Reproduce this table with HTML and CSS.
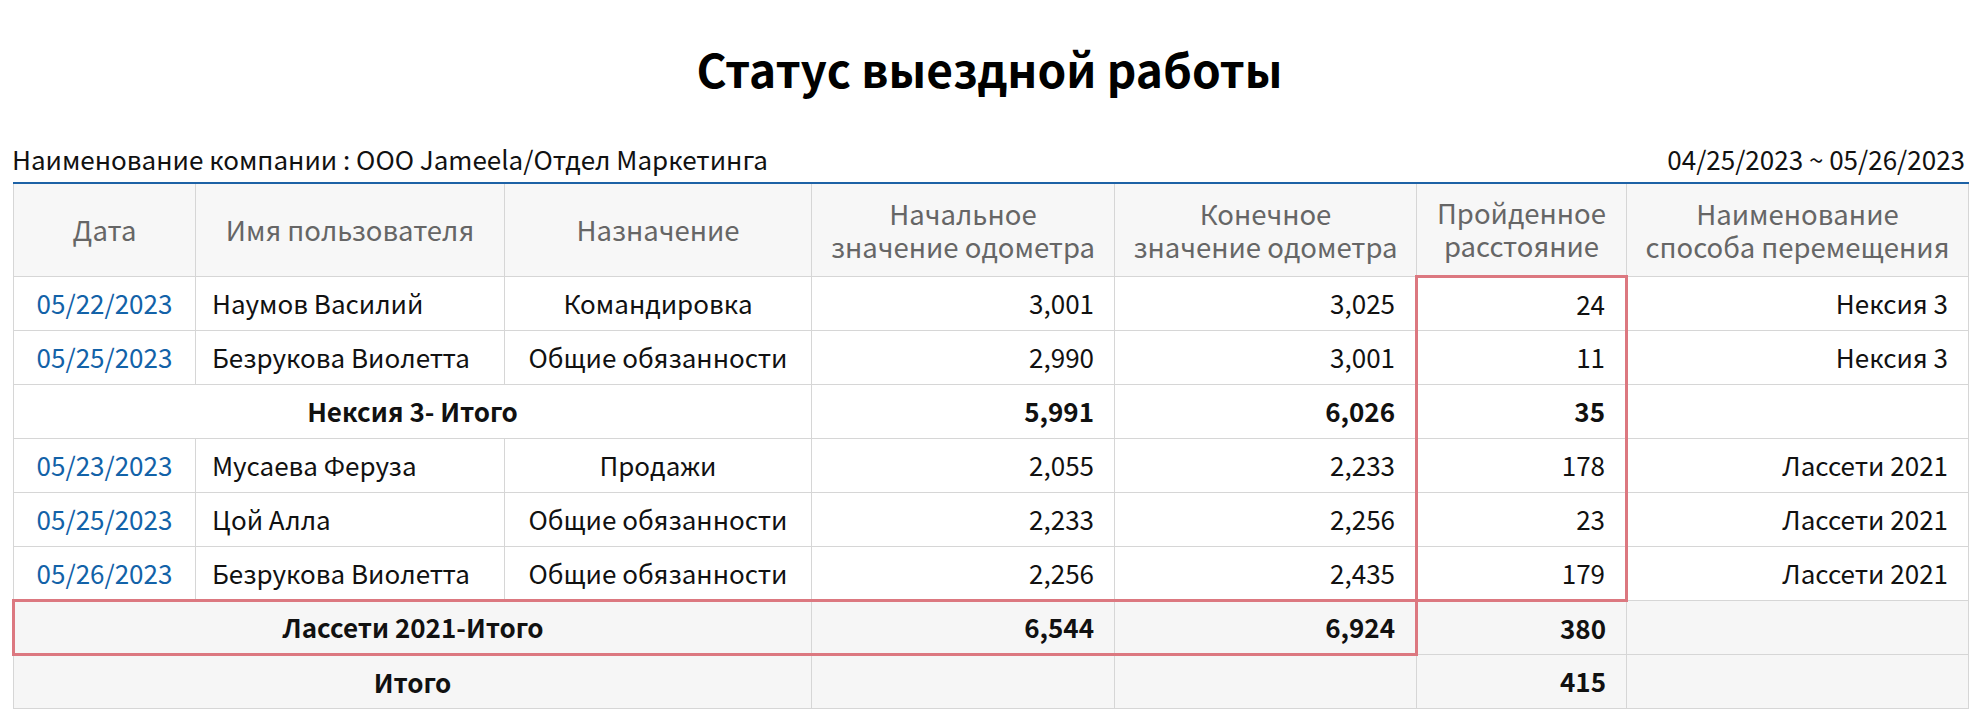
FILE: index.html
```html
<!DOCTYPE html>
<html lang="ru">
<head>
<meta charset="utf-8">
<title>Статус выездной работы</title>
<link rel="stylesheet" href="styles.css">
</head>
<body>
<div class="page">
  <h1 class="title">Статус выездной работы</h1>
  <div class="info">
    <span>Наименование компании : ООО Jameela/Отдел Маркетинга</span>
    <span>04/25/2023 ~ 05/26/2023</span>
  </div>
  <table class="report">
    <colgroup>
      <col class="c-date"><col class="c-user"><col class="c-purpose"><col class="c-start"><col class="c-end"><col class="c-dist"><col class="c-mode">
    </colgroup>
    <thead>
      <tr>
        <th>Дата</th>
        <th>Имя пользователя</th>
        <th>Назначение</th>
        <th>Начальное<br>значение одометра</th>
        <th>Конечное<br>значение одометра</th>
        <th>Пройденное<br>расстояние</th>
        <th>Наименование<br>способа перемещения</th>
      </tr>
    </thead>
    <tbody>
      <tr>
        <td class="date"><a href="#">05/22/2023</a></td>
        <td class="name">Наумов Василий</td>
        <td class="center">Командировка</td>
        <td class="num">3,001</td>
        <td class="num">3,025</td>
        <td class="num hl hl-top">24</td>
        <td class="num">Нексия 3</td>
      </tr>
      <tr>
        <td class="date"><a href="#">05/25/2023</a></td>
        <td class="name">Безрукова Виолетта</td>
        <td class="center">Общие обязанности</td>
        <td class="num">2,990</td>
        <td class="num">3,001</td>
        <td class="num hl">11</td>
        <td class="num">Нексия 3</td>
      </tr>
      <tr class="subtotal">
        <td class="center" colspan="3">Нексия 3- Итого</td>
        <td class="num">5,991</td>
        <td class="num">6,026</td>
        <td class="num hl">35</td>
        <td></td>
      </tr>
      <tr>
        <td class="date"><a href="#">05/23/2023</a></td>
        <td class="name">Мусаева Феруза</td>
        <td class="center">Продажи</td>
        <td class="num">2,055</td>
        <td class="num">2,233</td>
        <td class="num hl">178</td>
        <td class="num">Лассети 2021</td>
      </tr>
      <tr>
        <td class="date"><a href="#">05/25/2023</a></td>
        <td class="name">Цой Алла</td>
        <td class="center">Общие обязанности</td>
        <td class="num">2,233</td>
        <td class="num">2,256</td>
        <td class="num hl">23</td>
        <td class="num">Лассети 2021</td>
      </tr>
      <tr>
        <td class="date"><a href="#">05/26/2023</a></td>
        <td class="name">Безрукова Виолетта</td>
        <td class="center">Общие обязанности</td>
        <td class="num">2,256</td>
        <td class="num">2,435</td>
        <td class="num hl hl-bottom">179</td>
        <td class="num">Лассети 2021</td>
      </tr>
      <tr class="subtotal grey">
        <td class="center rb rb-first" colspan="3">Лассети 2021-Итого</td>
        <td class="num rb">6,544</td>
        <td class="num rb rb-last">6,924</td>
        <td class="num">380</td>
        <td></td>
      </tr>
      <tr class="subtotal grey">
        <td class="center" colspan="3">Итого</td>
        <td></td>
        <td></td>
        <td class="num">415</td>
        <td></td>
      </tr>
    </tbody>
  </table>
</div>
</body>
</html>
```

FILE: styles.css
```css
* { box-sizing: border-box; }

html, body {
  margin: 0;
  padding: 0;
  background: #ffffff;
}

body {
  font-family: "Noto Sans CJK KR", "Noto Sans", sans-serif;
  color: #111;
}

.page {
  padding: 0 11px 0 12px;
}

.title {
  margin: 0;
  padding-top: 36px;
  height: 130px;
  text-align: center;
  font-size: 46px;
  font-weight: 700;
  line-height: 64px;
  color: #000;
}

.info {
  display: flex;
  justify-content: space-between;
  align-items: flex-end;
  height: 52px;
  padding: 0 2px 6px 0;
  font-size: 26px;
  line-height: 34px;
  color: #111;
}

.report {
  width: 100%;
  table-layout: fixed;
  border-collapse: collapse;
  border-top: 2px solid #1d62a6;
  font-size: 26px;
}

.c-date { width: 182px; }
.c-user { width: 309px; }
.c-purpose { width: 307px; }
.c-start { width: 303px; }
.c-end { width: 302px; }
.c-dist { width: 210px; }
.c-mode { width: 342px; }

.report th,
.report td {
  border: 1px solid #d6d6d6;
  vertical-align: middle;
}

.report thead th {
  border-top: 2px solid #1d62a6;
  height: 93px;
  background: #f7f7f7;
  color: #666;
  font-size: 27.5px;
  font-weight: 400;
  line-height: 33px;
  padding: 0 8px;
  text-align: center;
}

.report td {
  height: 54px;
  padding: 0 20px;
  line-height: 30px;
  color: #111;
}

.report .date {
  text-align: center;
  padding: 0 6px;
}

.report .date a {
  color: #1262a8;
  text-decoration: none;
}

.report .name {
  text-align: left;
  padding-left: 16px;
}

.report .center { text-align: center; }
.report .num { text-align: right; }

.subtotal td {
  font-weight: 700;
}

.subtotal.grey td {
  background: #f6f6f6;
}

.report td.hl {
  border-left: 3px solid #dc7880;
  border-right: 3px solid #dc7880;
}

.report td.hl-top { border-top: 3px solid #dc7880; }
.report td.hl-bottom { border-bottom: 3px solid #dc7880; }

.report td.rb {
  border-top: 3px solid #dc7880;
  border-bottom: 3px solid #dc7880;
}

.report td.rb-first { border-left: 3px solid #dc7880; }
.report td.rb-last { border-right: 3px solid #dc7880; }
```
